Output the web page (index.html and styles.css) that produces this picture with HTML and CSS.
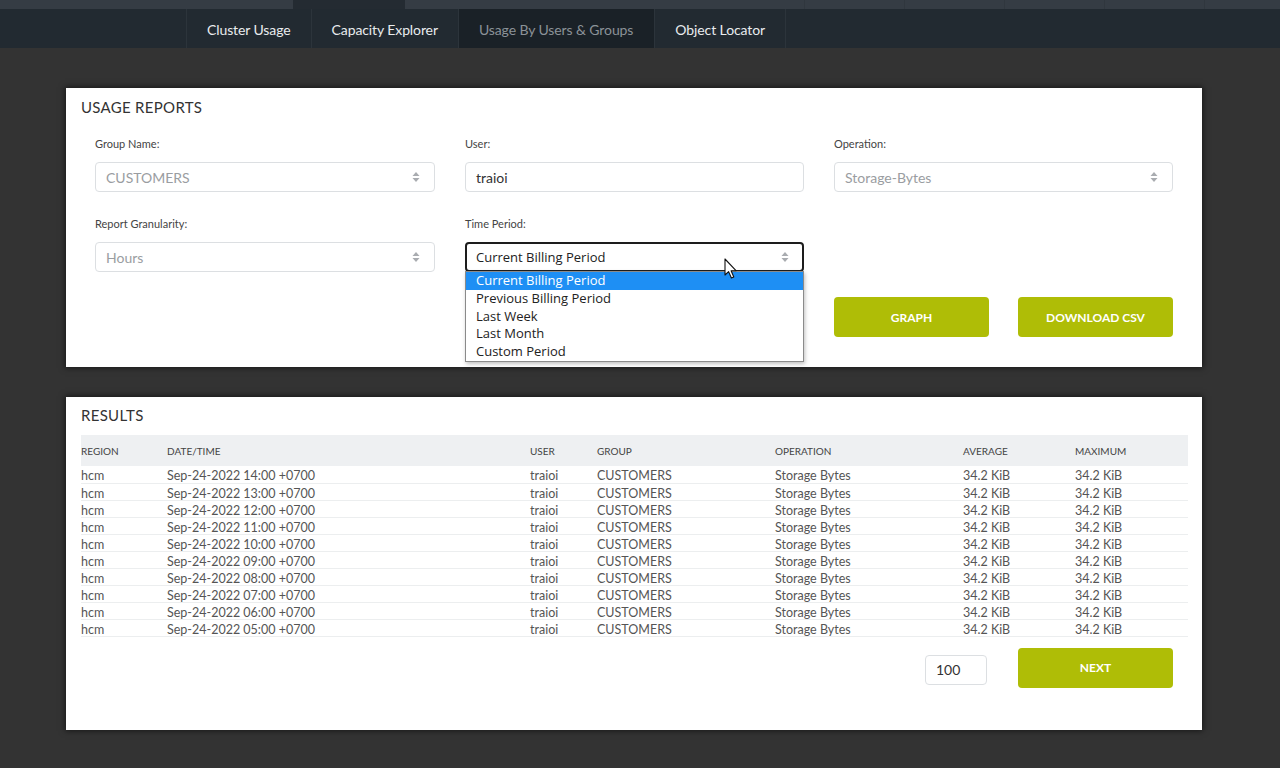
FILE: index.html
```html
<!DOCTYPE html>
<html>
<head>
<meta charset="utf-8">
<link rel="stylesheet" href="styles.css">
</head>
<body>
<div class="topstrip">
  <div class="seg s1"></div>
  <div class="seg s2"></div>
  <div class="seg s3"></div>
  <div class="seg s4"></div>
  <div class="seg s4"></div>
  <div class="seg s4"></div>
  <div class="seg s4"></div>
  <div class="seg s5"></div>
</div>
<nav class="nav">
  <a class="tab">Cluster Usage</a>
  <a class="tab">Capacity Explorer</a>
  <a class="tab active">Usage By Users &amp; Groups</a>
  <a class="tab">Object Locator</a>
</nav>
<main class="main">
  <section class="panel reports">
    <h2 class="title">USAGE REPORTS</h2>
    <div class="form">
      <div class="field">
        <label class="label">Group Name:</label>
        <div class="select muted">CUSTOMERS<svg class="arrows" width="8" height="12" viewBox="0 0 8 12"><path d="M4 1 L7.5 5 H0.5Z M4 11 L7.5 7 H0.5Z" fill="#a9acb0"/></svg></div>
      </div>
      <div class="field">
        <label class="label">User:</label>
        <div class="input">traioi</div>
      </div>
      <div class="field">
        <label class="label">Operation:</label>
        <div class="select muted">Storage-Bytes<svg class="arrows" width="8" height="12" viewBox="0 0 8 12"><path d="M4 1 L7.5 5 H0.5Z M4 11 L7.5 7 H0.5Z" fill="#a9acb0"/></svg></div>
      </div>
      <div class="field">
        <label class="label">Report Granularity:</label>
        <div class="select muted">Hours<svg class="arrows" width="8" height="12" viewBox="0 0 8 12"><path d="M4 1 L7.5 5 H0.5Z M4 11 L7.5 7 H0.5Z" fill="#a9acb0"/></svg></div>
      </div>
      <div class="field dd-field">
        <label class="label">Time Period:</label>
        <div class="select focused">Current Billing Period<svg class="arrows" width="8" height="12" viewBox="0 0 8 12"><path d="M4 1 L7.5 5 H0.5Z M4 11 L7.5 7 H0.5Z" fill="#a9acb0"/></svg></div>
        <ul class="dropdown">
          <li class="opt sel">Current Billing Period</li>
          <li class="opt">Previous Billing Period</li>
          <li class="opt">Last Week</li>
          <li class="opt">Last Month</li>
          <li class="opt">Custom Period</li>
        </ul>
        <svg class="cursor" width="14" height="22" viewBox="0 0 14 22"><path d="M1 1 V17 L4.6 13.6 L7.4 20 L9.8 19 L7.1 12.7 H12 Z" fill="#fff" stroke="#111" stroke-width="1.1" stroke-linejoin="round"/></svg>
      </div>
      <div class="buttons">
        <button class="btn">GRAPH</button>
        <button class="btn">DOWNLOAD CSV</button>
      </div>
    </div>
  </section>

  <section class="panel results">
    <h2 class="title">RESULTS</h2>
    <table class="table">
      <thead>
        <tr><th class="c1">REGION</th><th class="c2">DATE/TIME</th><th class="c3">USER</th><th class="c4">GROUP</th><th class="c5">OPERATION</th><th class="c6">AVERAGE</th><th class="c7">MAXIMUM</th></tr>
      </thead>
      <tbody>
        <tr><td>hcm</td><td>Sep-24-2022 14:00 +0700</td><td>traioi</td><td>CUSTOMERS</td><td>Storage Bytes</td><td>34.2 KiB</td><td>34.2 KiB</td></tr>
        <tr><td>hcm</td><td>Sep-24-2022 13:00 +0700</td><td>traioi</td><td>CUSTOMERS</td><td>Storage Bytes</td><td>34.2 KiB</td><td>34.2 KiB</td></tr>
        <tr><td>hcm</td><td>Sep-24-2022 12:00 +0700</td><td>traioi</td><td>CUSTOMERS</td><td>Storage Bytes</td><td>34.2 KiB</td><td>34.2 KiB</td></tr>
        <tr><td>hcm</td><td>Sep-24-2022 11:00 +0700</td><td>traioi</td><td>CUSTOMERS</td><td>Storage Bytes</td><td>34.2 KiB</td><td>34.2 KiB</td></tr>
        <tr><td>hcm</td><td>Sep-24-2022 10:00 +0700</td><td>traioi</td><td>CUSTOMERS</td><td>Storage Bytes</td><td>34.2 KiB</td><td>34.2 KiB</td></tr>
        <tr><td>hcm</td><td>Sep-24-2022 09:00 +0700</td><td>traioi</td><td>CUSTOMERS</td><td>Storage Bytes</td><td>34.2 KiB</td><td>34.2 KiB</td></tr>
        <tr><td>hcm</td><td>Sep-24-2022 08:00 +0700</td><td>traioi</td><td>CUSTOMERS</td><td>Storage Bytes</td><td>34.2 KiB</td><td>34.2 KiB</td></tr>
        <tr><td>hcm</td><td>Sep-24-2022 07:00 +0700</td><td>traioi</td><td>CUSTOMERS</td><td>Storage Bytes</td><td>34.2 KiB</td><td>34.2 KiB</td></tr>
        <tr><td>hcm</td><td>Sep-24-2022 06:00 +0700</td><td>traioi</td><td>CUSTOMERS</td><td>Storage Bytes</td><td>34.2 KiB</td><td>34.2 KiB</td></tr>
        <tr><td>hcm</td><td>Sep-24-2022 05:00 +0700</td><td>traioi</td><td>CUSTOMERS</td><td>Storage Bytes</td><td>34.2 KiB</td><td>34.2 KiB</td></tr>
      </tbody>
    </table>
    <div class="pager">
      <div class="pagesize">100</div>
      <button class="btn next">NEXT</button>
    </div>
  </section>
</main>
</body>
</html>
```

FILE: styles.css
```css
* { box-sizing: border-box; }
html, body { margin: 0; padding: 0; }
body {
  background: #333333;
  font-family: Lato, "Open Sans", Arial, sans-serif;
  color: #444;
  width: 1280px;
  height: 768px;
  overflow: hidden;
}
.topstrip {
  height: 9px;
  display: flex;
  background: #353c44;
}
.seg { height: 9px; border-right: 1px solid #30373e; }
.s1 { width: 293px; border-right: none; }
.s2 { width: 112px; background: #242b32; border-right: none; }
.s3 { width: 400px; }
.s4 { width: 100px; }
.s5 { flex: 1; border-right: none; }

.nav {
  height: 39px;
  background: #222a31;
  display: flex;
  padding-left: 186px;
}
.tab {
  display: flex;
  align-items: center;
  padding: 1px 20px 0;
  font-size: 14px;
  color: #e9ecee;
  border-left: 1px solid #2c343b;
  letter-spacing: -0.1px;
}
.tab:last-child { border-right: 1px solid #2c343b; }
.tab.active {
  background: #1a2127;
  color: #8b9298;
  padding: 1px 21px 0 20px;
}

.main { padding: 40px 0 0 66px; }
.panel {
  width: 1136px;
  background: #fff;
  box-shadow: 0 0 6px 1px rgba(0,0,0,0.55);
}
.title {
  margin: 0;
  font-size: 15px;
  font-weight: 400;
  line-height: 18px;
  color: #333;
  letter-spacing: 0.3px;
}
.reports {
  height: 279px;
  padding: 10px 0 0 15px;
}
.form {
  margin: 21px 0 0 14px;
  display: grid;
  grid-template-columns: 340px 339px 339px;
  column-gap: 30px;
  row-gap: 25px;
}
.field { position: relative; }
.label {
  display: block;
  font-size: 11px;
  line-height: 14px;
  color: #444;
  margin-bottom: 11px;
}
.select, .input {
  height: 30px;
  border: 1px solid #dcdfe2;
  border-radius: 4px;
  display: flex;
  align-items: center;
  padding: 0 10px;
  font-size: 14px;
  color: #333;
  position: relative;
}
.select.muted { color: #9a9da1; }
.arrows { position: absolute; right: 14px; top: 8px; }
.select.focused {
  border: 2px solid #1d1d1d;
  padding-left: 9px;
  font-family: "Open Sans", "Noto Sans", sans-serif;
  font-size: 13px;
  color: #222;
}
.select.focused .arrows { right: 13px; top: 7px; }
.dropdown {
  position: absolute;
  left: 0;
  top: 54px;
  width: 339px;
  margin: 0;
  padding: 0;
  list-style: none;
  background: #fff;
  border: 1px solid #8a8a8a;
  box-shadow: 1px 2px 4px rgba(0,0,0,0.25);
  z-index: 5;
}
.opt {
  height: 17.75px;
  line-height: 17px;
  padding-left: 10px;
  font-family: "Open Sans", "Noto Sans", sans-serif;
  font-size: 13px;
  color: #222;
}
.opt.sel { background: #1e8ff4; color: #fff; }
.cursor { position: absolute; left: 259px; top: 41px; z-index: 6; }
.buttons {
  grid-column: 3;
  grid-row: 3;
  display: flex;
  justify-content: space-between;
}
.btn {
  width: 155px;
  height: 40px;
  border: none;
  border-radius: 4px;
  background: #afbd06;
  color: #fff;
  font-family: Lato, Arial, sans-serif;
  font-weight: 700;
  font-size: 12px;
  padding: 0;
}

.results {
  margin-top: 30px;
  height: 333px;
  padding: 9px 14px 0 15px;
}
.table {
  margin-top: 11px;
  width: 1107px;
  border-collapse: collapse;
  table-layout: fixed;
}
.table th {
  background: #eef0f2;
  height: 31px;
  font-size: 10px;
  font-weight: 400;
  text-align: left;
  color: #444;
  padding: 0;
}
.c1 { width: 86px; }
.c2 { width: 363px; }
.c3 { width: 67px; }
.c4 { width: 178px; }
.c5 { width: 188px; }
.c6 { width: 112px; }
.c7 { width: 113px; }
.table td {
  height: 17px;
  padding: 4px 0 0;
  font-size: 12.5px;
  line-height: 12px;
  color: #555;
  border-bottom: 1px solid #eceeef;
  white-space: nowrap;
}
.pager {
  display: flex;
  justify-content: flex-end;
  align-items: center;
  margin-top: 11px;
  padding-right: 15px;
  gap: 31px;
}
.pagesize {
  width: 62px;
  height: 30px;
  margin-top: 4px;
  border: 1px solid #dcdfe2;
  border-radius: 4px;
  font-size: 14px;
  display: flex;
  align-items: center;
  padding-left: 10px;
  color: #333;
}
```
